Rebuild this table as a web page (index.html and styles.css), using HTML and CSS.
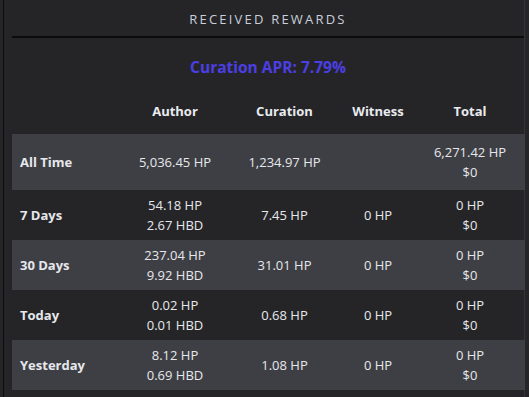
FILE: index.html
```html
<!DOCTYPE html>
<html>
<head>
<meta charset="utf-8">
<link rel="stylesheet" href="styles.css">
</head>
<body>
<div class="panel">
  <div class="title">RECEIVED REWARDS</div>
  <div class="apr">Curation APR: 7.79%</div>
  <table class="rewards">
    <colgroup>
      <col class="c-label"><col class="c-author"><col class="c-curation"><col class="c-witness"><col class="c-total">
    </colgroup>
    <thead>
      <tr><th></th><th>Author</th><th>Curation</th><th>Witness</th><th>Total</th></tr>
    </thead>
    <tbody>
      <tr class="alt first">
        <td class="label">All Time</td>
        <td>5,036.45 HP</td>
        <td>1,234.97 HP</td>
        <td></td>
        <td>6,271.42 HP<br>$0</td>
      </tr>
      <tr>
        <td class="label">7 Days</td>
        <td>54.18 HP<br>2.67 HBD</td>
        <td>7.45 HP</td>
        <td>0 HP</td>
        <td>0 HP<br>$0</td>
      </tr>
      <tr class="alt">
        <td class="label">30 Days</td>
        <td>237.04 HP<br>9.92 HBD</td>
        <td>31.01 HP</td>
        <td>0 HP</td>
        <td>0 HP<br>$0</td>
      </tr>
      <tr>
        <td class="label">Today</td>
        <td>0.02 HP<br>0.01 HBD</td>
        <td>0.68 HP</td>
        <td>0 HP</td>
        <td>0 HP<br>$0</td>
      </tr>
      <tr class="alt">
        <td class="label">Yesterday</td>
        <td>8.12 HP<br>0.69 HBD</td>
        <td>1.08 HP</td>
        <td>0 HP</td>
        <td>0 HP<br>$0</td>
      </tr>
    </tbody>
  </table>
</div>
</body>
</html>
```
FILE: styles.css
```css
html, body {
  margin: 0;
  padding: 0;
  background: #252528;
  height: 100%;
}
body {
  font-family: "Open Sans", "Noto Sans", sans-serif;
  font-size: 13px;
  color: #e6e8ec;
  padding-left: 3px;
}
.panel {
  border-left: 1px solid #0e0e10;
  border-right: 1px solid #34343a;
  width: 522px;
  height: 397px;
  padding-left: 8px;
  box-sizing: border-box;
}
.title {
  height: 36px;
  line-height: 38px;
  text-align: center;
  letter-spacing: 2.2px;
  color: #c9d0da;
  font-size: 13px;
  border-bottom: 2px solid #0b0b0c;
}
.apr {
  text-align: center;
  color: #4b3fe4;
  font-weight: bold;
  font-size: 15.5px;
  padding-top: 18px;
  line-height: 22px;
}
.rewards {
  border-collapse: collapse;
  width: 513px;
  table-layout: fixed;
  margin-top: 10px;
}
.c-label { width: 110px; }
.c-author { width: 106px; }
.c-curation { width: 113px; }
.c-witness { width: 74px; }
.c-total { width: 110px; }
.rewards th {
  font-weight: bold;
  color: #e9ebef;
  height: 46px;
  padding: 0;
  vertical-align: middle;
}
.rewards td {
  text-align: center;
  line-height: 20px;
  padding: 5px 0;
  height: 40px;
  vertical-align: middle;
}
.rewards tr.first td {
  padding-top: 8px;
  padding-bottom: 8px;
}
.rewards td.label {
  text-align: left;
  padding-left: 8px;
  font-weight: bold;
}
.rewards tr.alt {
  background: #3e3f44;
}
```
